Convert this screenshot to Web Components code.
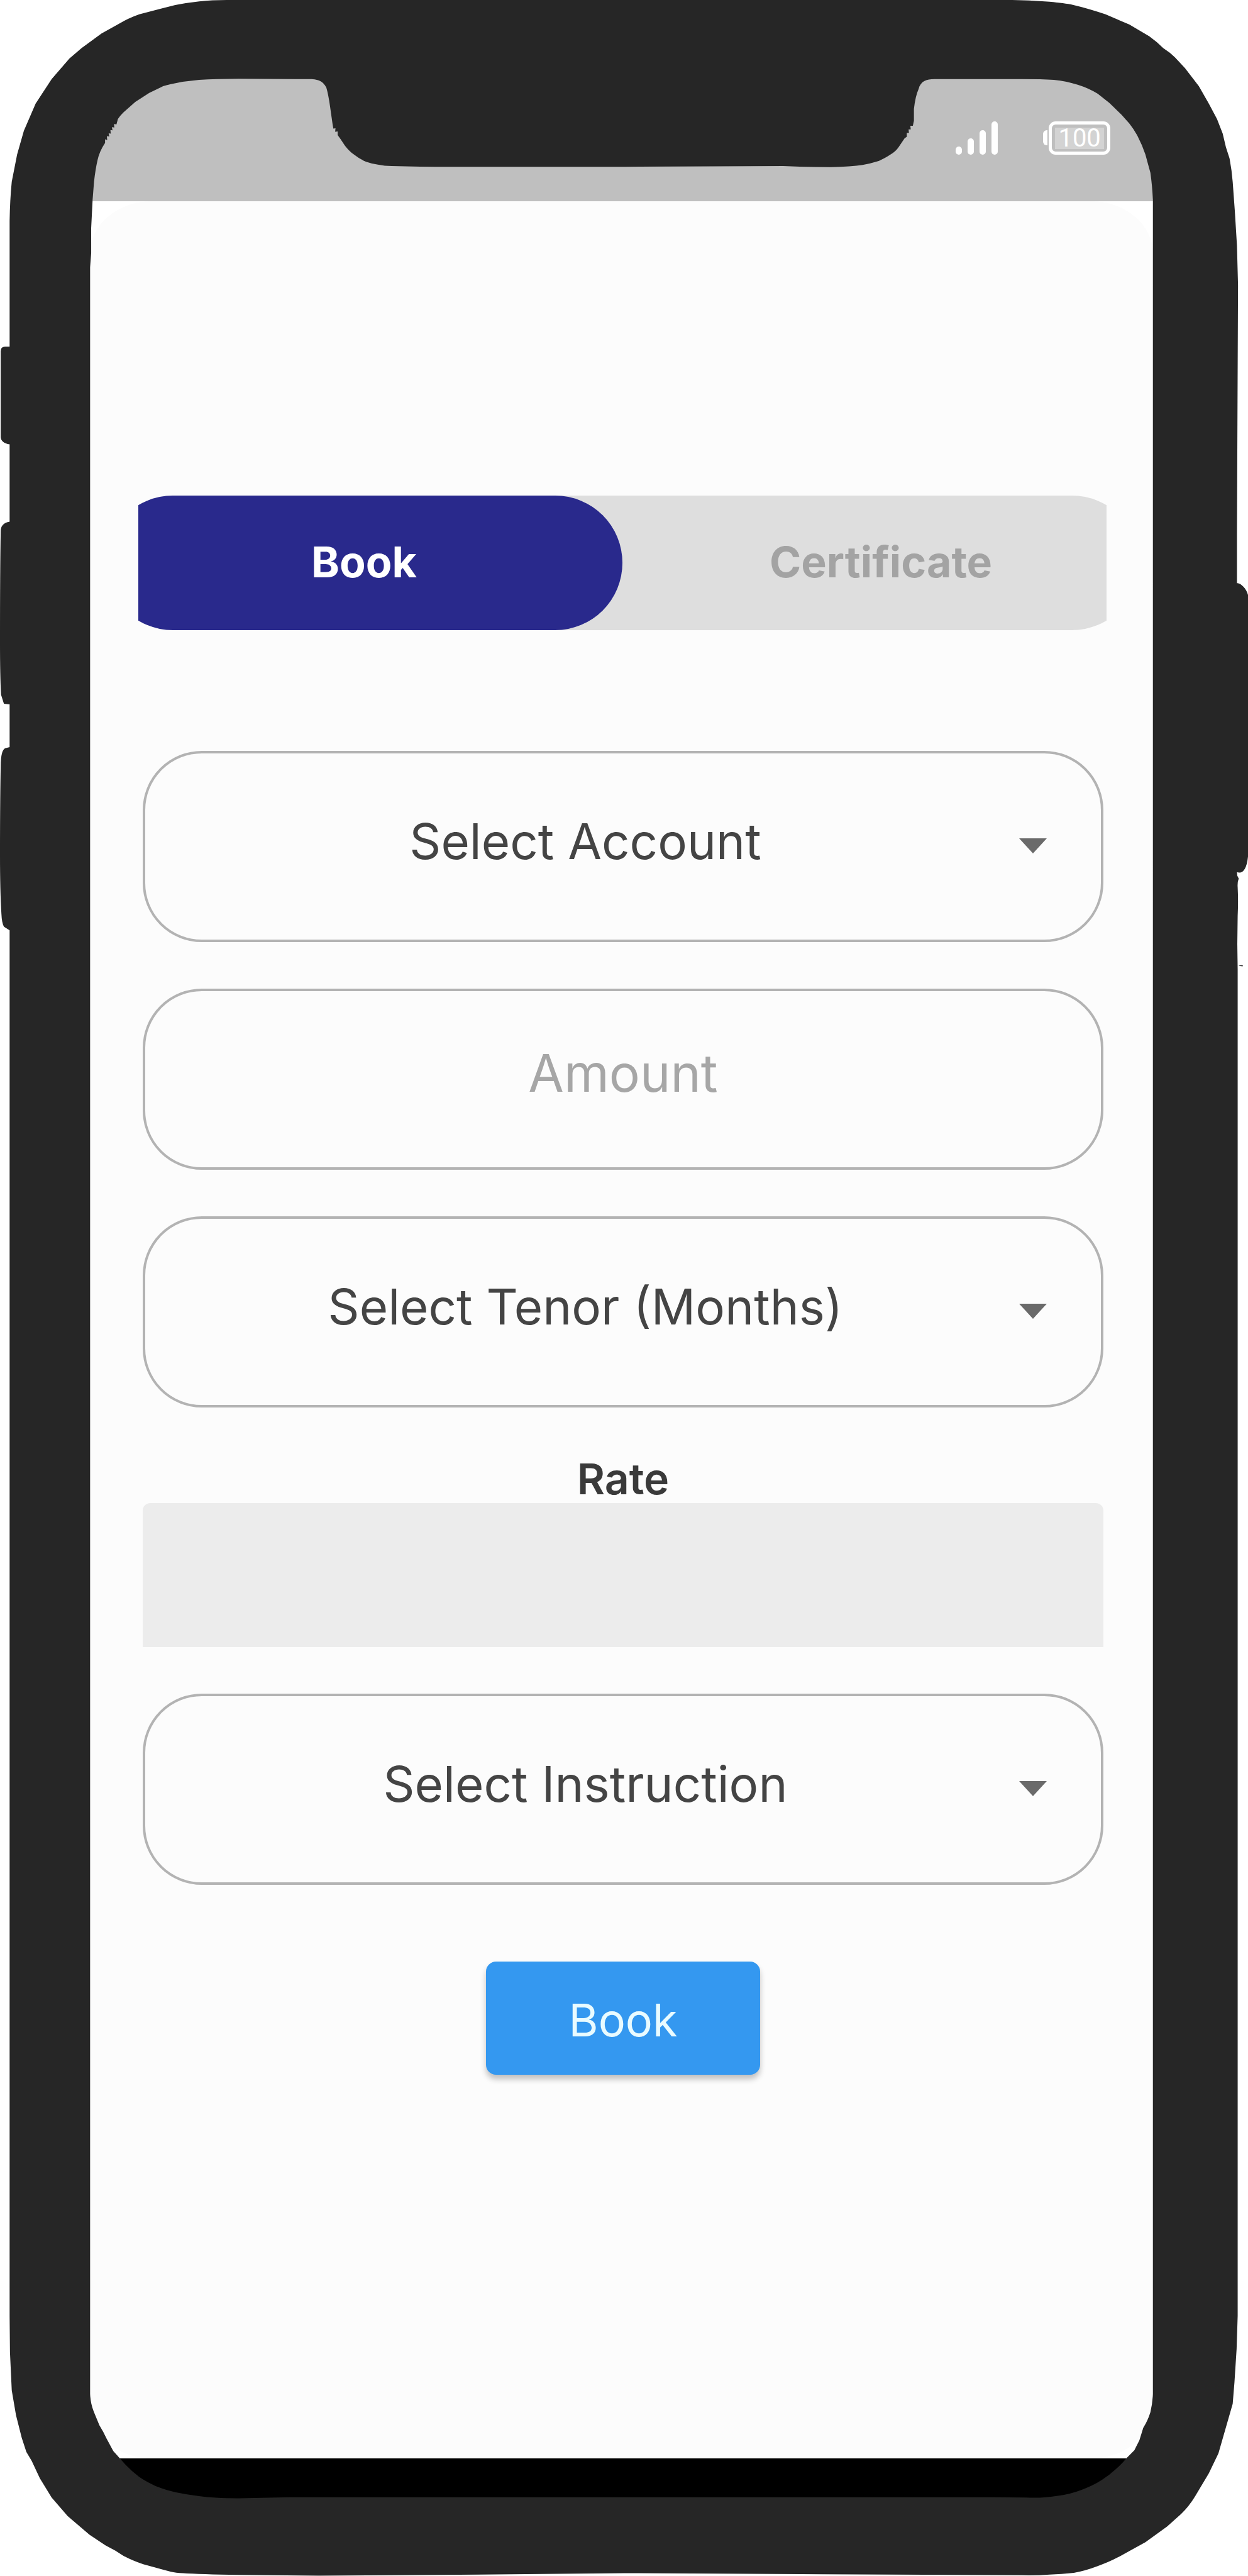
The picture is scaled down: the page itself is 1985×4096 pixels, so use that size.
<!DOCTYPE html>
<html lang="en">
<head>
<meta charset="utf-8">
<meta name="viewport" content="width=device-width, initial-scale=1">
<title>Book</title>
<style>
  body { margin: 0; background: #fff; font-family: Inter, "Open Sans", sans-serif; color: #3d3d3d; }
</style>
</head>
<body>
<phone-device>
  <status-bar slot="status" level="100"></status-bar>
  <booking-screen></booking-screen>
</phone-device>

<script>
const define = (name, html, setup) => {
  const template = document.createElement('template');
  template.innerHTML = html;
  customElements.define(name, class extends HTMLElement {
    constructor() {
      super();
      this.attachShadow({ mode: 'open' }).append(template.content.cloneNode(true));
    }
    connectedCallback() { if (setup) setup(this, this.shadowRoot); }
  });
};

/* Phone body: the screen flows in a grid cell, the bezel is drawn over it. */
define('phone-device', `
<style>
  :host { display: grid; min-height: 100vh; position: relative; overflow: hidden; }
  .screen { display: flex; flex-direction: column; margin: 124px 7.6% 123px 7.2%; background: #fff; }
  .panel { flex: 1; display: flex; flex-direction: column; background: #fcfcfc; border-radius: 98px / 84px; }
  .home { height: 64px; background: #000; }
  svg { position: absolute; inset: 0; width: 100%; height: 100%; pointer-events: none; }
</style>
<div class="screen">
  <slot name="status"></slot>
  <div class="panel"><slot></slot></div>
  <div class="home"></div>
</div>
<svg viewBox="0 0 3504 7230" preserveAspectRatio="none" fill="#262626" aria-hidden="true">
  <path fill-rule="evenodd" d="
    M637 0 H2825 C2870 0 2910 2 2947 5 C2975 8 2995 10 3014 14 C3048 22 3078 31 3104 40 L3171 69 L3227 102 Q3248 117 3266 135 Q3285 147 3299 161 L3327 191 L3366 242 L3394 291 L3417 334 L3433 375 L3442 413 L3452 444 Q3458 474 3461 510 L3467 592 L3473 689 L3476 800
    L3473 1500 V1637 C3482 1635 3500 1652 3504 1670 V2404 C3500 2440 3490 2453 3473 2448 L3474 2458 L3478 2466 Q3474 2475 3475 2490 Q3477 2530 3475 2570 L3474 2650 L3475 2720 V6500
    L3472 6593 L3466 6686 L3461 6747 L3421 6886 L3394 6942 L3355 7007 Q3338 7035 3316 7056 L3277 7091 L3216 7135 L3160 7166 Q3120 7189 3082 7202 Q3048 7215 3015 7221 Q2980 7225 2947 7226 Q2910 7229 2869 7228 L2311 7225 L1752 7222 L1229 7227 L894 7229 L670 7227 Q560 7225 514 7222 Q493 7221 480 7218 L402 7197 Q370 7186 346 7173 L324 7159 L296 7144 L251 7114 L190 7062 L145 7010 L112 6956 L89 6907 L74 6882 L61 6842 L45 6779 L33 6709 L28 6602 L27 6500
    V2611 L11 2601 Q5 2590 4 2565 Q0 2500 0 2400 Q0 2250 2 2151 Q2 2100 18 2099 L27 2097
    V1977 L11 1975 L3 1950 Q0 1900 0 1800 Q0 1600 2 1491 Q2 1468 27 1464
    V1247 Q3 1243 2 1227 V986 Q2 973 14 973 H27
    V620 Q28 560 33 510 L48 434 L67 367 L100 291 L145 222 L195 164 L229 135 L285 94 L335 66 Q360 51 391 40 L492 14 Q523 8 559 4 Q595 0 637 0 Z
    M253 750 L256 711 V640 L260 561 L264 510 Q268 475 274 449 Q279 425 295 401 V391 L301 393 L300 382 L307 383 L305 374 L311 375 L310 365 L316 366 L314 357 L321 358 L320 348 L327 349 L331 334 Q337 325 346 316 L380 286 L419 261 L458 242 Q466 239 480 236 Q520 227 559 224 Q605 221 670 221 L827 222 H869 C900 222 908 232 916 245 Q922 265 927 301 L934 350 L936 361 L942 360 L941 370 L948 369 V379 L956 390 L968 408 Q980 424 994 434 Q1010 447 1028 454 Q1045 460 1061 462 Q1080 466 1100 466 Q1200 469 1341 468 L1752 468 L2199 466 Q2265 469 2333 469 Q2390 468 2422 463 Q2445 459 2467 452 Q2487 443 2500 434 Q2515 425 2523 413 L2540 388 L2546 384 V373 L2552 373 L2551 363 L2557 363 L2556 353 L2563 353 L2566 339 V306 Q2570 270 2579 250 C2585 228 2600 222 2624 222 H2869 Q2925 222 2959 224 Q2996 228 3026 238 Q3055 247 3082 263 L3115 289 L3149 322 L3171 347 Q3183 362 3193 380 Q3207 407 3216 434 L3230 485 Q3235 520 3237 561 V6719 Q3236 6745 3230 6770 Q3223 6793 3210 6814 L3199 6849 L3185 6877 L3164 6898 Q3150 6915 3132 6931 Q3115 6947 3093 6961 Q3068 6977 3037 6988 Q3006 7000 2970 7005 Q2930 7012 2880 7010 L2780 7009 H816 L670 7012 Q600 7012 559 7006 Q525 7002 492 6995 Q460 6987 436 6977 Q410 6965 391 6952 Q370 6936 352 6917 L318 6879 L299 6844 L290 6826 L279 6807 L263 6768 Q254 6745 253 6719 Z"/>
  <path d="M3477 2711 Q3485 2708 3490 2710 L3489 2712 Z"/>
</svg>
`);

define('status-bar', `
<style>
  :host { display: flex; align-items: center; justify-content: flex-end; gap: 72px; height: 196px;
          box-sizing: border-box; padding: 0 68px 6px 0; background: #bfbfbf; color: #fff; }
  svg { display: block; }
  .battery { display: flex; align-items: center; gap: 2px; }
  .tip { width: 7px; height: 24px; background: #fff; border-radius: 6px 0 0 6px; }
  .case { display: grid; box-sizing: border-box; width: 98px; height: 53px; padding: 5px; border: 5px solid #fff; border-radius: 11px; }
  .level { display: grid; place-items: center; background: #d3d3d3; font: 40px/34px Roboto, sans-serif; }
</style>
<svg width="67" height="53" viewBox="0 0 67 53" fill="#fff" aria-hidden="true">
  <rect x="0" y="40" width="10" height="13" rx="5"/>
  <rect x="19" y="27" width="10" height="26" rx="5"/>
  <rect x="38" y="14" width="10" height="39" rx="5"/>
  <rect x="57" y="0" width="10" height="53" rx="5"/>
</svg>
<div class="battery"><span class="tip"></span><span class="case"><span class="level"></span></span></div>
`, (el, root) => { root.querySelector('.level').textContent = el.getAttribute('level'); });

/* Two-way switch: a pill whose outer ends run past the clipped edges. */
define('segment-tabs', `
<style>
  :host { display: block; overflow: hidden; }
  .track { display: grid; grid-template-columns: 1fr 1fr; height: 214px; margin: 0 -52px; border-radius: 107px; background: #dedede; }
  button { margin: 0; padding: 0 0 4px; border: 0; border-radius: 107px; background: none; color: #a3a3a3;
           font: 700 68px/80px Inter, sans-serif; }
  button[aria-selected="true"] { background: #29298c; color: #fff; }
</style>
<div class="track" role="tablist">
  <button type="button" role="tab" aria-selected="true">Book</button>
  <button type="button" role="tab" aria-selected="false">Certificate</button>
</div>
`);

define('select-field', `
<style>
  :host { display: grid; align-items: center; }
  select, svg { grid-area: 1 / 1; }
  select { appearance: none; box-sizing: border-box; width: 100%; height: 304px; margin: 0; padding: 0 156px 16px 36px;
           border: 4px solid #b3b3b3; border-radius: 94px; background: #fcfcfc; color: #444;
           font: 400 78px/96px Inter, sans-serif; text-align: center; text-align-last: center; }
  svg { justify-self: end; margin: 0 90px 2px 0; pointer-events: none; }
</style>
<select><option></option></select>
<svg width="44" height="24" viewBox="0 0 44 24" aria-hidden="true"><path d="M0 0H44L22 24Z" fill="#6a6a6a"/></svg>
`, (el, root) => {
  root.querySelector('option').textContent = el.getAttribute('label');
  root.querySelector('select').setAttribute('aria-label', el.getAttribute('label'));
});

define('amount-field', `
<style>
  :host { display: block; }
  input { display: block; box-sizing: border-box; width: 100%; height: 288px; margin: 0; padding: 0 36px 20px;
          border: 4px solid #b3b3b3; border-radius: 94px; background: #fcfcfc; color: #444;
          font: 400 82px/96px Inter, sans-serif; text-align: center; }
  input::placeholder { color: #a6a6a6; opacity: 1; }
</style>
<input type="text" inputmode="decimal" placeholder="Amount" aria-label="Amount">
`);

define('rate-field', `
<style>
  :host { display: flex; flex-direction: column; }
  label { font: 600 68px/78px Inter, sans-serif; text-align: center; color: #3a3a3a; }
  input { box-sizing: border-box; width: 100%; height: 229px; margin: 0; padding: 0 36px; border: 0;
          border-radius: 12px 12px 0 0; background: #ececec; font: 400 78px/96px Inter, sans-serif; text-align: center; }
</style>
<label for="rate">Rate</label>
<input id="rate" type="text" readonly>
`);

define('booking-screen', `
<style>
  :host { display: flex; flex-direction: column; padding-top: 468px; }
  segment-tabs { margin: 0 74px 0 77px; }
  form { display: flex; flex-direction: column; gap: 74px; margin: 192px 79px 0 84px; }
  button { align-self: center; width: 436px; height: 180px; margin: 48px 0 0; padding: 6px 0 0; border: 0; border-radius: 16px;
           background: #3498f0; color: #e9fbff; font: 400 72px/96px Inter, sans-serif;
           box-shadow: 0 7px 10px rgba(0, 0, 0, .24); }
</style>
<segment-tabs></segment-tabs>
<form>
  <select-field label="Select Account"></select-field>
  <amount-field></amount-field>
  <select-field label="Select Tenor (Months)"></select-field>
  <rate-field></rate-field>
  <select-field label="Select Instruction"></select-field>
  <button type="button">Book</button>
</form>
`);
</script>
</body>
</html>
